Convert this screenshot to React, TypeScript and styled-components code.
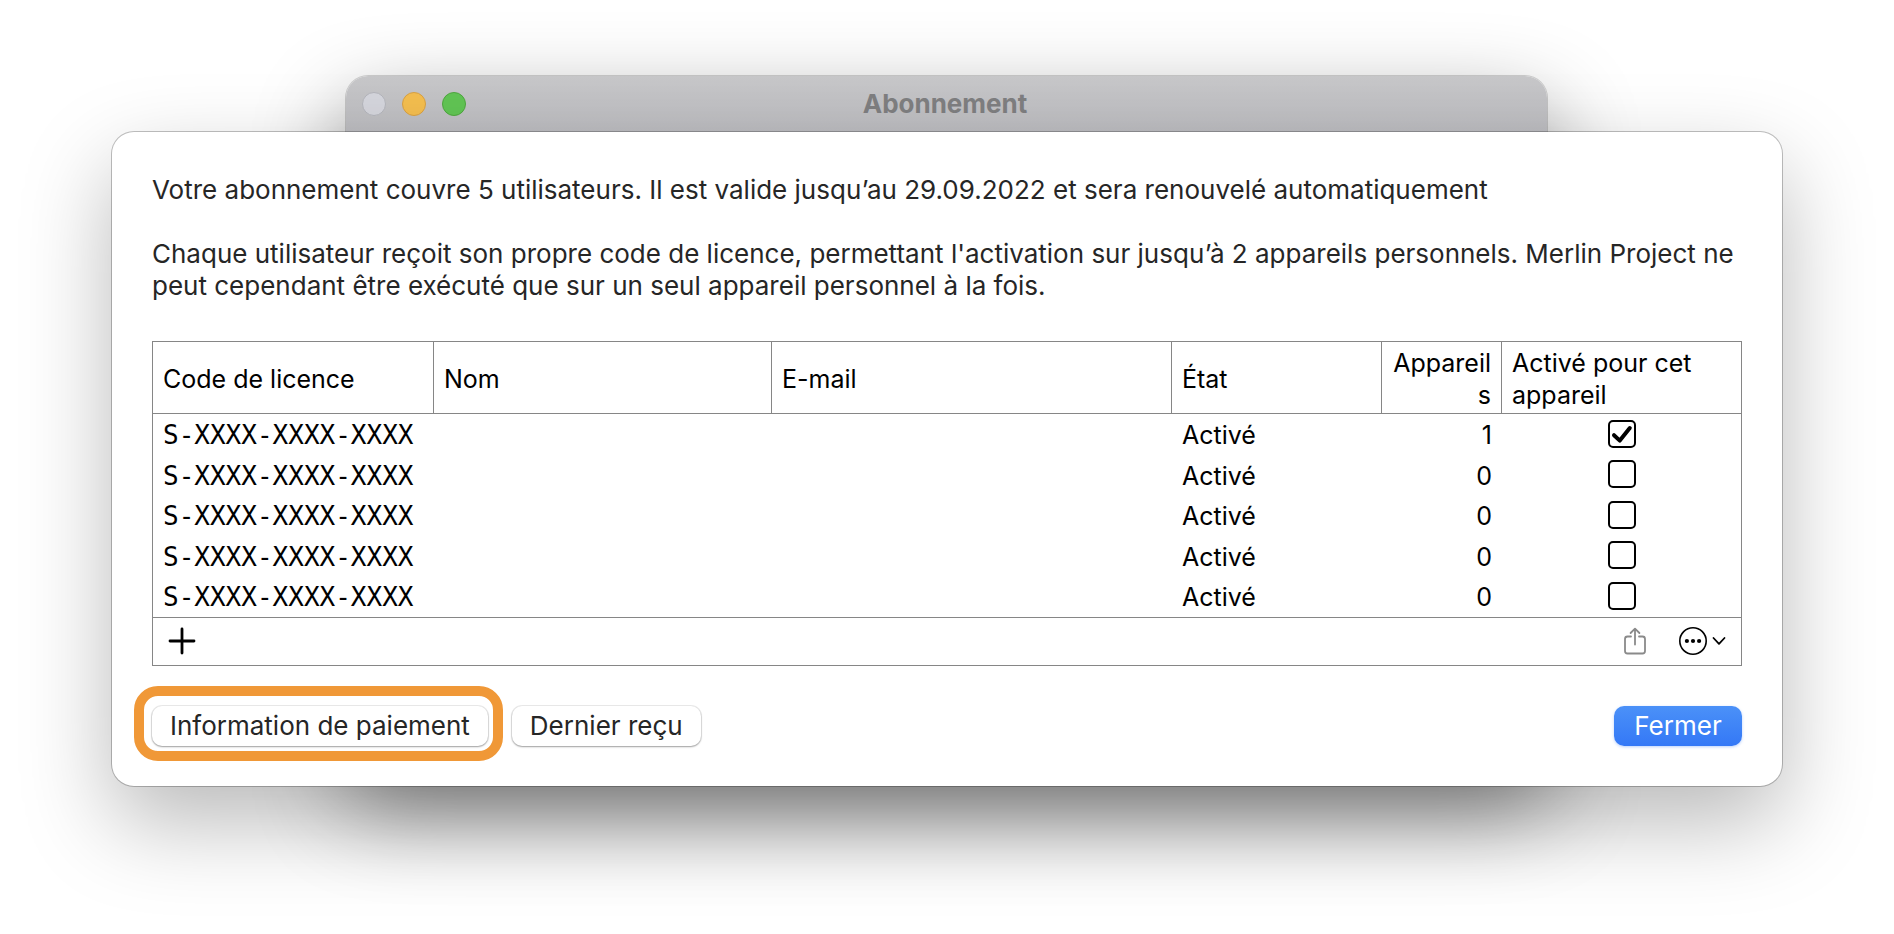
import React from "react";
import styled, { createGlobalStyle } from "styled-components";

const SANS = `Inter, Roboto, "Liberation Sans", sans-serif`;
const MONO = `"DejaVu Sans Mono", "Liberation Mono", monospace`;
const LINE = "#868686";

const GlobalStyle = createGlobalStyle`
  *, *::before, *::after { box-sizing: border-box; }
  body {
    margin: 0;
    background: #ffffff;
    font-family: ${SANS};
    font-size: 26px;
    line-height: 32px;
    color: #000000;
  }
`;

const Stage = styled.div`
  position: relative;
  min-height: 100vh;
  padding: 75px 112px 148px;
`;

const BackWindow = styled.section`
  position: absolute;
  inset: 76px 347px 164px 346px;
  border-radius: 22px;
  background: linear-gradient(#c7c7c9 0, #bdbdc1 57px);
  box-shadow: 0 0 0 1px rgba(0, 0, 0, 0.16), 0 36px 90px rgba(0, 0, 0, 0.45);
`;

const TitleBar = styled.header`
  position: relative;
  display: grid;
  grid-template-columns: 1fr auto 1fr;
  align-items: center;
  height: 57px;
  padding: 0 20px 0 16px;
  margin: 0 234px;
`;

const Lights = styled.div`
  display: flex;
  gap: 16px;
`;

const Light = styled.button<{ $fill: string; $ring: string }>`
  width: 24px;
  height: 24px;
  padding: 0;
  border: 1px solid ${(p) => p.$ring};
  border-radius: 50%;
  background: ${(p) => p.$fill};
`;

const Title = styled.h1`
  margin: 0;
  font-size: 26px;
  line-height: 32px;
  font-weight: 700;
  color: #7f7f81;
`;

const Sheet = styled.main`
  position: relative;
  padding: 42px 40px 40px;
  border-radius: 22px;
  background: #ffffff;
  box-shadow: 0 0 0 1px rgba(0, 0, 0, 0.24), 0 36px 90px rgba(0, 0, 0, 0.28);
`;

const Intro = styled.p`
  margin: 0 0 32px;
  color: #262626;
`;

const Licences = styled.div`
  margin-top: 39px;
  border: 1px solid ${LINE};
`;

const Table = styled.table`
  width: 100%;
  table-layout: fixed;
  border-collapse: separate;
  border-spacing: 0;
  font-size: 25px;
`;

const Head = styled.th<{ $width?: string; $end?: boolean }>`
  width: ${(p) => p.$width ?? "auto"};
  height: 72px;
  padding: 4px 10px 2px;
  border-bottom: 1px solid ${LINE};
  border-right: 1px solid ${LINE};
  font-weight: 400;
  text-align: ${(p) => (p.$end ? "right" : "left")};
  overflow-wrap: anywhere;

  &:last-child {
    border-right: 0;
  }
`;

const Row = styled.tr`
  height: 40px;

  &:nth-child(even) {
    height: 41px;
  }
`;

const Cell = styled.td<{ $end?: boolean }>`
  padding: 2px 10px 0;
  text-align: ${(p) => (p.$end ? "right" : "left")};
`;

const TickCell = styled.td`
  padding: 0 10px 1px;
`;

const Code = styled.code`
  font-family: ${MONO};
  font-size: 26px;
  white-space: nowrap;
`;

const Tick = styled.input`
  appearance: none;
  display: block;
  width: 28px;
  height: 28px;
  margin: 0 auto;
  border: 2px solid #000000;
  border-radius: 5px;
  background: #ffffff;

  &:checked {
    background: #ffffff
      url("data:image/svg+xml,%3Csvg xmlns='http://www.w3.org/2000/svg' viewBox='0 0 24 24'%3E%3Cpath d='M4 13.2 9.8 18.6 19.8 6' fill='none' stroke='black' stroke-width='4' stroke-linecap='round' stroke-linejoin='round'/%3E%3C/svg%3E")
      center / 24px 24px no-repeat;
  }
`;

const Toolbar = styled.div`
  display: flex;
  align-items: center;
  justify-content: space-between;
  height: 48px;
  margin-top: 1px;
  padding: 0 14px 1px 15px;
  border-top: 1px solid ${LINE};
`;

const Tools = styled.div`
  display: flex;
  align-items: center;
  gap: 32px;
`;

const ToolButton = styled.button`
  display: flex;
  align-items: center;
  gap: 4px;
  padding: 0;
  border: 0;
  background: none;
  color: #000000;

  &:disabled {
    color: #8a8a8a;
  }
`;

const Footer = styled.footer`
  display: flex;
  gap: 24px;
  margin-top: 40px;
`;

const Button = styled.button<{ $primary?: boolean }>`
  height: 40px;
  min-width: 128px;
  padding: 0 18px;
  border: 0;
  border-radius: 10px;
  font: inherit;
  white-space: nowrap;
  color: ${(p) => (p.$primary ? "#ffffff" : "#262626")};
  background: ${(p) => (p.$primary ? "linear-gradient(#4b91f8, #3478f6)" : "#ffffff")};
  margin-left: ${(p) => (p.$primary ? "auto" : "0")};
  box-shadow: ${(p) =>
    p.$primary
      ? "0 1px 3px rgba(52, 120, 246, 0.35)"
      : "0 0 0 1px rgba(0, 0, 0, 0.08), 0 1px 2px rgba(0, 0, 0, 0.32)"};
`;

const Highlighted = styled.div`
  position: relative;
  display: flex;

  &::after {
    content: "";
    position: absolute;
    inset: -20px -15px -15px -18px;
    border: 10px solid #f09837;
    border-radius: 24px;
    pointer-events: none;
  }
`;

const licences = [
  { code: "S-XXXX-XXXX-XXXX", devices: 1 },
  { code: "S-XXXX-XXXX-XXXX", devices: 0 },
  { code: "S-XXXX-XXXX-XXXX", devices: 0 },
  { code: "S-XXXX-XXXX-XXXX", devices: 0 },
  { code: "S-XXXX-XXXX-XXXX", devices: 0 },
];

const PlusIcon = () => (
  <svg width="28" height="28" viewBox="0 0 28 28" fill="none" stroke="currentColor" strokeWidth="2.8" strokeLinecap="round">
    <path d="M14 2v24M2 14h24" />
  </svg>
);

const ShareIcon = () => (
  <svg width="24" height="28" viewBox="0 0 24 28" fill="none" stroke="currentColor" strokeWidth="1.8" strokeLinecap="round" strokeLinejoin="round">
    <path d="M8 9.5H4.5A2.5 2.5 0 0 0 2 12v12a2.5 2.5 0 0 0 2.5 2.5h15A2.5 2.5 0 0 0 22 24V12a2.5 2.5 0 0 0-2.5-2.5H16" />
    <path d="M12 17.5V2M7.6 6 12 1.6 16.4 6" />
  </svg>
);

const MoreIcon = () => (
  <svg width="28" height="28" viewBox="0 0 28 28" fill="none">
    <circle cx="14" cy="14" r="13.2" stroke="currentColor" strokeWidth="1.6" />
    <g fill="currentColor">
      <circle cx="7.9" cy="14" r="2.1" />
      <circle cx="14" cy="14" r="2.1" />
      <circle cx="20.1" cy="14" r="2.1" />
    </g>
  </svg>
);

const ChevronIcon = () => (
  <svg width="16" height="16" viewBox="0 0 16 16" fill="none" stroke="currentColor" strokeWidth="1.8" strokeLinecap="round" strokeLinejoin="round">
    <path d="M2.5 5 8 10.8 13.5 5" />
  </svg>
);

export default function App() {
  return (
    <Stage>
      <GlobalStyle />
      <BackWindow aria-hidden="true" />
      <TitleBar>
        <Lights>
          <Light aria-label="Fermer la fenêtre" disabled $fill="#d5d6dd" $ring="#b4b5bc" />
          <Light aria-label="Réduire" $fill="#f4be4f" $ring="#d8a144" />
          <Light aria-label="Agrandir" $fill="#61c554" $ring="#4fa73f" />
        </Lights>
        <Title>Abonnement</Title>
      </TitleBar>
      <Sheet>
        <Intro>
          Votre abonnement couvre 5 utilisateurs. Il est valide jusqu’au 29.09.2022 et sera renouvelé automatiquement
        </Intro>
        <Intro>
          Chaque utilisateur reçoit son propre code de licence, permettant l'activation sur jusqu’à 2 appareils
          personnels. Merlin Project ne peut cependant être exécuté que sur un seul appareil personnel à la fois.
        </Intro>
        <Licences>
          <Table>
            <thead>
              <tr>
                <Head $width="281px">Code de licence</Head>
                <Head $width="338px">Nom</Head>
                <Head>E-mail</Head>
                <Head $width="210px">État</Head>
                <Head $width="120px" $end>
                  Appareils
                </Head>
                <Head $width="239px">Activé pour cet appareil</Head>
              </tr>
            </thead>
            <tbody>
              {licences.map((licence, i) => (
                <Row key={i}>
                  <Cell>
                    <Code>{licence.code}</Code>
                  </Cell>
                  <Cell />
                  <Cell />
                  <Cell>Activé</Cell>
                  <Cell $end>{licence.devices}</Cell>
                  <TickCell>
                    <Tick
                      type="checkbox"
                      aria-label={`Activé pour cet appareil, licence ${i + 1}`}
                      defaultChecked={licence.devices > 0}
                    />
                  </TickCell>
                </Row>
              ))}
            </tbody>
          </Table>
          <Toolbar>
            <ToolButton aria-label="Ajouter">
              <PlusIcon />
            </ToolButton>
            <Tools>
              <ToolButton aria-label="Partager" disabled>
                <ShareIcon />
              </ToolButton>
              <ToolButton aria-label="Plus d’options">
                <MoreIcon />
                <ChevronIcon />
              </ToolButton>
            </Tools>
          </Toolbar>
        </Licences>
        <Footer>
          <Highlighted>
            <Button>Information de paiement</Button>
          </Highlighted>
          <Button>Dernier reçu</Button>
          <Button $primary>Fermer</Button>
        </Footer>
      </Sheet>
    </Stage>
  );
}
